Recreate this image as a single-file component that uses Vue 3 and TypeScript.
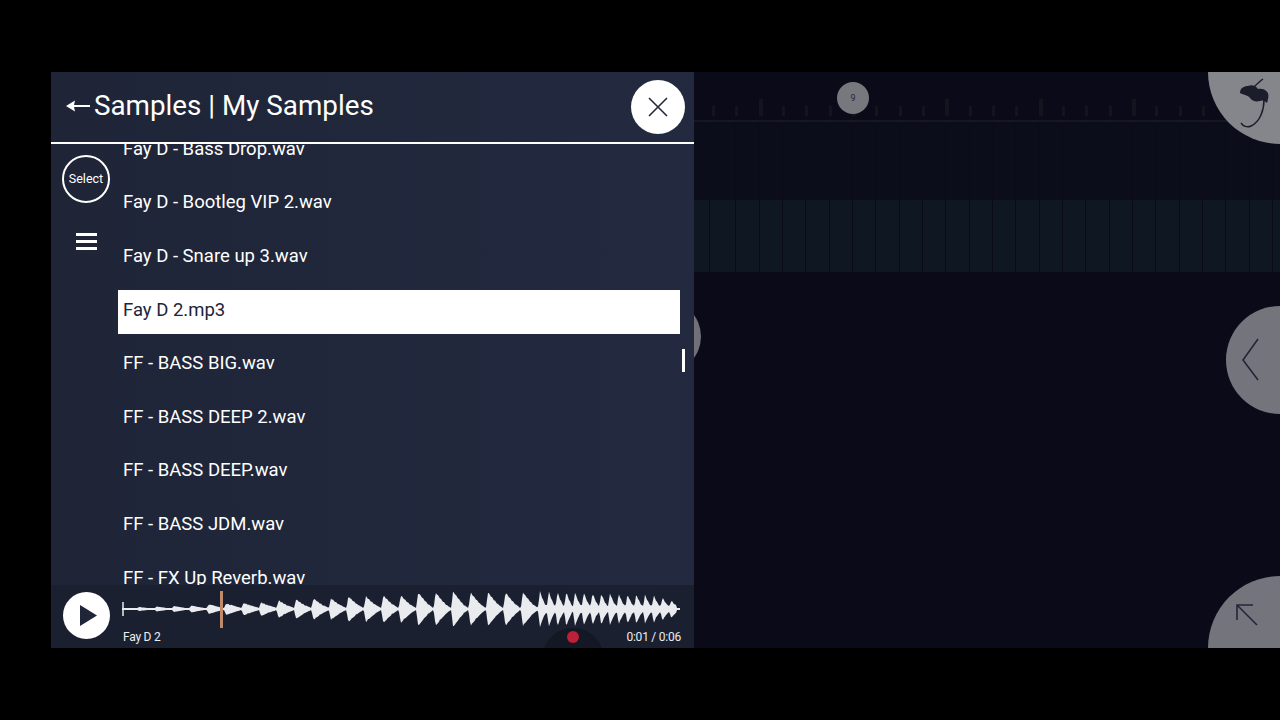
<script setup lang="ts">
const files: string[] = [
  'Fay D - Bass Drop.wav',
  'Fay D - Bootleg VIP 2.wav',
  'Fay D - Snare up 3.wav',
  'Fay D 2.mp3',
  'FF - BASS BIG.wav',
  'FF - BASS DEEP 2.wav',
  'FF - BASS DEEP.wav',
  'FF - BASS JDM.wav',
  'FF - FX Up Reverb.wav'
];
const selected = 3;

// ruler ticks, every fourth one is taller
const ticks: number[] = Array.from({ length: 25 }, (_, i) => i);

// peak height of each hit in the sample
const slowAmps = [2, 2.5, 3, 3.5, 5, 6, 6.5, 7, 9, 10, 11, 11, 13, 13, 14, 14, 17, 17, 18, 17, 17, 17, 17];
const fastAmps = [18, 18, 17.5, 17.5, 17, 17, 16.5, 16, 16, 15.5, 15, 15, 14.5, 14, 12, 9];

const amplitudeAt = (x: number): number => {
  let amp = 1;
  const hit = (start: number, peak: number, len: number, rest: number, curve: number) => {
    const d = x - start;
    if (d < -1 || d > len) return;
    const shape = d < 1 ? (d + 1) / 2 : Math.pow(1 - (d - 1) / (len - 1), curve);
    amp = Math.max(amp, rest + (peak - rest) * shape);
  };
  slowAmps.forEach((a, i) => hit(138 + i * 17.45, a, 15.5, Math.min(1.6, a * 0.25), 1.25));
  fastAmps.forEach((a, i) => hit(539 + i * 8.75, a, 8.75, 2.5, 1.6));
  return x > 676 ? 1 : amp;
};

const buildWave = (): string => {
  const top: string[] = [];
  const bottom: string[] = [];
  for (let x = 122; x <= 680; x += 1) {
    const a = amplitudeAt(x);
    const wobble = a > 4 ? ((x * 7) % 3) * 0.45 : 0;
    top.push(`${x - 122},${(18 - a + wobble).toFixed(1)}`);
    bottom.unshift(`${x - 122},${(18 + a - ((x * 5) % 4 === 0 ? wobble : 0)).toFixed(1)}`);
  }
  return `M${top.join('L')}L${bottom.join('L')}Z`;
};
const wavePath = buildWave();
</script>

<template>
  <div class="stage">
    <section class="panel">
      <header class="head">
        <svg class="back" width="24" height="14" viewBox="0 0 24 14">
          <path d="M0 7 9 1.5 8 6H24V8H8L9 12.5Z" fill="#fff" />
        </svg>
        <h1>Samples | My Samples</h1>
        <button class="close">
          <svg width="20" height="20" viewBox="0 0 20 20">
            <path d="M1 1 19 19M19 1 1 19" stroke="#23283a" stroke-width="1.6" fill="none" />
          </svg>
        </button>
      </header>

      <div class="body">
        <aside class="rail">
          <button class="select">Select</button>
          <div class="burger"><i></i><i></i><i></i></div>
        </aside>
        <ul class="list">
          <li v-for="(file, index) in files" :key="file" :class="{ 'is-current': index === selected }">{{ file }}</li>
        </ul>
        <div class="scrollbar"></div>
      </div>

      <footer class="player">
        <button class="play">
          <svg width="17" height="21" viewBox="0 0 18 22"><path d="M0 0 18 11 0 22Z" fill="#20253a" /></svg>
        </button>
        <div class="track">
          <div class="wave">
            <svg width="559" height="36" viewBox="0 0 559 36">
              <path :d="wavePath" fill="#e9ebef" />
              <path d="M1 11V25" stroke="#e9ebef" stroke-width="1.5" />
            </svg>
            <div class="playhead"></div>
          </div>
          <div class="meta">
            <span>Fay D 2</span>
            <span>0:01 / 0:06</span>
          </div>
        </div>
        <div class="rec-shade"></div>
        <div class="rec-dot"></div>
      </footer>
    </section>

    <section class="daw">
      <div class="ruler">
        <div class="ticks">
          <span v-for="t in ticks" :key="t" :class="{ big: t % 4 === 2 }"></span>
        </div>
        <div class="badge">9</div>
      </div>
      <div class="lane lane-a"></div>
      <div class="lane lane-b"></div>
      <div class="floor"></div>

      <div class="peek"></div>
      <div class="round logo">
        <svg width="72" height="72" viewBox="0 0 72 72">
          <g transform="translate(28 0)">
            <path d="M4 21C4 16 8 14 12 14 16 12 20 14 22 17 25 16 30 17 32 21 33 24 32 28 31 31 28 28 26 28 24 29 20 30 16 29 14 26 12 23 8 23 4 21Z" fill="#1b1d2a" />
            <path d="M18 15C21 12 24 9 27 7M28 28C28 38 24 50 15 54 11 56 7 54 5 51" stroke="#1b1d2a" stroke-width="1.5" fill="none" />
          </g>
        </svg>
      </div>
      <div class="round side">
        <svg width="54" height="108" viewBox="0 0 54 108">
          <path d="M32 33 17 54 32 74" stroke="#23253a" stroke-width="1.6" fill="none" />
        </svg>
      </div>
      <div class="round corner">
        <svg width="72" height="72" viewBox="0 0 72 72">
          <path d="M29 29 49 49M29 44V29H45" stroke="#23253a" stroke-width="1.6" fill="none" />
        </svg>
      </div>
    </section>
  </div>
</template>

<style scoped>
.stage {
  margin: 72px 0 0 51px;
  height: 576px;
  display: flex;
  font-family: Roboto, "Liberation Sans", sans-serif;
  color: #fff;
}

.panel {
  position: relative;
  z-index: 1;
  width: 643px;
  flex: none;
  display: flex;
  flex-direction: column;
  background: linear-gradient(90deg, #1f2537, #232a40);
}

.head {
  height: 70px;
  flex: none;
  border-bottom: 2px solid #fff;
  display: flex;
  align-items: center;
  padding: 0 9px 0 15px;
}

.back {
  flex: none;
  margin-bottom: 2px;
}

.head h1 {
  margin: 0 0 3px 4px;
  font-size: 27.8px;
  font-weight: 400;
  flex: 1;
}

.close {
  width: 54px;
  height: 54px;
  border: 0;
  border-radius: 50%;
  background: #fff;
  display: flex;
  align-items: center;
  justify-content: center;
  padding: 0;
}

.body {
  position: relative;
  flex: 1;
  min-height: 0;
  display: flex;
  overflow: hidden;
}

.rail {
  width: 67px;
  flex: none;
  display: flex;
  flex-direction: column;
  align-items: center;
  padding: 11px 0 0 3px;
  box-sizing: border-box;
}

.select {
  width: 48px;
  height: 48px;
  padding: 0 0 2px;
  border: 2px solid #fff;
  border-radius: 50%;
  background: transparent;
  color: #fff;
  font: 12.5px Roboto, sans-serif;
}

.burger {
  margin-top: 30px;
  width: 21px;
  display: flex;
  flex-direction: column;
  gap: 4.5px;
}

.burger i {
  height: 2.5px;
  background: #fff;
}

.list {
  list-style: none;
  margin: -15.2px 0 0;
  padding: 0;
  width: 562px;
  flex: none;
}

.list li {
  height: 44px;
  margin-bottom: 9.6px;
  padding-left: 5px;
  line-height: 41px;
  font-size: 18.5px;
  white-space: nowrap;
}

.list li.is-current {
  background: #fff;
  color: #20253a;
}

.scrollbar {
  position: absolute;
  left: 631px;
  top: 205px;
  width: 3px;
  height: 23px;
  background: #fff;
}

.player {
  position: relative;
  height: 63px;
  flex: none;
  display: flex;
  background: #1b2030;
  overflow: hidden;
}

.play {
  position: relative;
  z-index: 1;
  width: 47px;
  height: 47px;
  margin: 7px 0 0 12px;
  flex: none;
  border: 0;
  border-radius: 50%;
  background: #fff;
  display: flex;
  align-items: center;
  justify-content: center;
  padding: 0 0 0 3px;
}

.track {
  position: relative;
  z-index: 1;
  margin-left: 12px;
  width: 559px;
}

.wave {
  position: relative;
  height: 36px;
  margin-top: 6px;
}

.wave svg {
  display: block;
}

.playhead {
  position: absolute;
  left: 98px;
  top: 0;
  width: 2.5px;
  height: 37px;
  background: #c08a6c;
}

.meta {
  display: flex;
  justify-content: space-between;
  margin-top: 3px;
  padding: 0 0 0 1px;
  font-size: 12px;
  letter-spacing: -0.02em;
  line-height: 15px;
  color: #eceef2;
}

.rec-shade {
  position: absolute;
  left: 491px;
  top: 43px;
  width: 62px;
  height: 62px;
  border-radius: 50%;
  background: #141724;
}

.rec-dot {
  position: absolute;
  z-index: 1;
  left: 516px;
  top: 46px;
  width: 12px;
  height: 12px;
  border-radius: 50%;
  background: #bd2038;
}

.daw {
  position: relative;
  flex: 1;
  min-width: 0;
  display: flex;
  flex-direction: column;
  overflow: hidden;
  background: #0b0a18;
}

.ruler {
  position: relative;
  height: 48px;
  flex: none;
  border-bottom: 2px solid #161723;
  background: #0b0a18;
}

.ticks {
  display: flex;
  align-items: flex-end;
  height: 46px;
  padding-left: 18px;
}

.ticks span {
  flex: none;
  width: 23.33px;
  position: relative;
}

.ticks span::before {
  content: "";
  position: absolute;
  left: 0;
  bottom: 2px;
  width: 3px;
  height: 10px;
  background: #14141f;
}

.ticks span.big::before {
  width: 4px;
  height: 17px;
}

.badge {
  position: absolute;
  left: 143px;
  top: 10px;
  width: 32px;
  height: 32px;
  border-radius: 50%;
  background: #77787e;
  color: #23253a;
  font-size: 9px;
  line-height: 32px;
  text-align: center;
}

.lane {
  flex: none;
  background-image: repeating-linear-gradient(90deg, transparent 0 22.33px, #0a0b14 22.33px 23.33px);
  background-position: 19px 0;
}

.lane-a {
  height: 78px;
  background-color: #0c0d1a;
}

.lane-b {
  height: 72px;
  background-color: #0e1722;
}

.floor {
  flex: 1;
  background: #0b0a18;
}

.peek {
  position: absolute;
  left: -66px;
  top: 228px;
  width: 73px;
  height: 73px;
  border-radius: 50%;
  background: #6f7078;
}

.round {
  position: absolute;
  right: 0;
  overflow: hidden;
}

.round svg {
  display: block;
}

.logo {
  top: 0;
  width: 72px;
  height: 72px;
  border-radius: 0 0 0 72px;
  background: #85868c;
}

.side {
  top: 234px;
  width: 54px;
  height: 108px;
  border-radius: 54px 0 0 54px;
  background: #74757c;
}

.corner {
  bottom: 0;
  width: 72px;
  height: 72px;
  border-radius: 72px 0 0 0;
  background: #74757c;
}
</style>

<style>
html,
body {
  background: #000;
}
</style>
